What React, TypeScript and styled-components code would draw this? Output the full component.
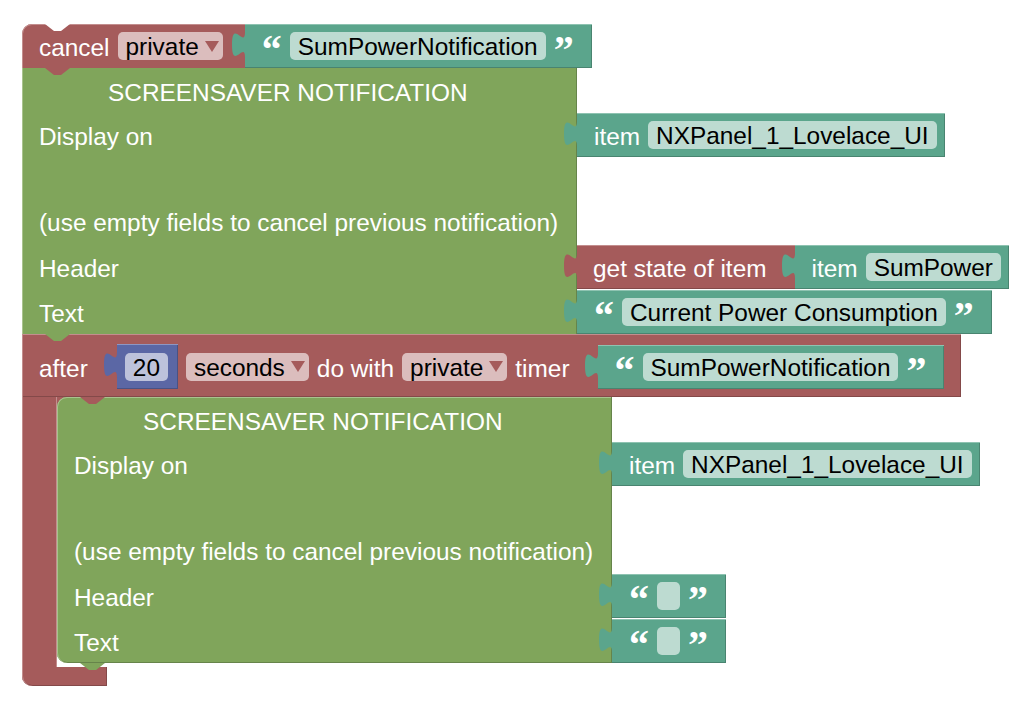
import styled, { createGlobalStyle } from "styled-components";
import type { ReactNode } from "react";

const palette = {
  red: { base: "#a55b5b", light: "#c38e8e", dark: "#844949", field: "#dbbdbd" },
  green: { base: "#80a55b", light: "#a9c38e", dark: "#66844a", field: "#ccdbbd" },
  teal: { base: "#5ba58c", light: "#8ec3b1", dark: "#498470", field: "#bddbd1" },
  blue: { base: "#5b67a5", light: "#8e96c3", dark: "#495284", field: "#bdc2db" },
};
type Tone = keyof typeof palette;

const GlobalStyle = createGlobalStyle`
  * { box-sizing: border-box; }
  body {
    margin: 0;
    background: #fff;
    font-family: "Liberation Sans", Arial, sans-serif;
    font-size: 24.4px;
  }
`;

const Workspace = styled.div`
  display: flex;
  flex-direction: column;
  align-items: flex-start;
  padding: 24px 0 0 22px;
`;

const Label = styled.span`
  color: #fff;
  white-space: nowrap;
  line-height: 28px;
  margin-top: 4px;
`;

const Field = styled.span<{ $tone: Tone; $pr?: number }>`
  display: inline-flex;
  align-items: center;
  flex-shrink: 0;
  height: 28px;
  min-width: 23px;
  padding: 2px ${(p) => p.$pr ?? 8}px 0 8px;
  border-radius: 5px;
  background: ${(p) => palette[p.$tone].field};
  color: #000;
  white-space: nowrap;
`;

const Arrow = styled.span`
  width: 0;
  height: 0;
  margin: -2px 0 0 6px;
  border-left: 7px solid transparent;
  border-right: 7px solid transparent;
  border-top: 11px solid ${palette.red.base};
`;

const Quote = styled.span`
  align-self: flex-start;
  margin-top: 6px;
  font-family: "Liberation Serif", "Times New Roman", serif;
  font-weight: 700;
  font-size: 40px;
  line-height: 40px;
  color: #fff;
`;

const ValueBlock = styled.div<{ $tone: Tone; $pl?: number; $pr?: number; $ml?: number; $h?: number }>`
  position: relative;
  display: flex;
  align-items: center;
  flex-shrink: 0;
  gap: 8px;
  height: ${(p) => p.$h ?? 44}px;
  padding-left: ${(p) => p.$pl ?? 17}px;
  padding-right: ${(p) => p.$pr ?? 8}px;
  margin-left: ${(p) => p.$ml ?? 0}px;
  background: ${(p) => palette[p.$tone].base};
  box-shadow: inset 0 1px 0 ${(p) => palette[p.$tone].light},
    inset 0 -1px 0 ${(p) => palette[p.$tone].dark},
    inset -1px 0 0 ${(p) => palette[p.$tone].dark};
`;

const TabShape = styled.svg`
  position: absolute;
  left: -13px;
  top: 8px;
  overflow: visible;
`;

const Tab = ({ tone }: { tone: Tone }) => (
  <TabShape width="14" height="26" viewBox="0 0 14 26">
    <path
      d="M14,0 L13,0 C13,17 0,-13.5 0,12.75 C0,39 13,8.5 13,25.5 L14,25.5 Z"
      fill={palette[tone].base}
    />
  </TabShape>
);

const Notch = styled.span<{ $color: string; $edge: "top" | "bottom"; $left?: number }>`
  position: absolute;
  left: ${(p) => p.$left ?? 23}px;
  top: ${(p) => (p.$edge === "top" ? "0" : "100%")};
  width: 25px;
  height: 7px;
  background: ${(p) => p.$color};
  clip-path: polygon(0 0, 100% 0, 64% 100%, 36% 100%);
  z-index: 3;
`;

const CancelHead = styled.div`
  position: relative;
  display: flex;
  align-items: center;
  gap: 8px;
  height: 44px;
  padding-left: 17px;
  background: ${palette.red.base};
  border-top-left-radius: 10px;
  box-shadow: inset 0 1px 0 ${palette.red.light}, inset 1px 0 0 ${palette.red.light};
`;

const GreenStack = styled.div<{ $nested?: boolean }>`
  position: relative;
  display: flex;
  flex-direction: column;
  margin-bottom: ${(p) => (p.$nested ? 4 : 0)}px;
  background: ${(p) =>
    p.$nested ? `linear-gradient(${palette.red.base}, ${palette.red.base}) 0 0 / 12px 12px no-repeat` : "none"};
`;

const GreenRow = styled.div`
  display: flex;
  align-items: center;
`;

const GreenCell = styled.div<{ $h: number; $pl?: number; $pt?: number; $round?: "top" | "bottom" }>`
  display: flex;
  align-items: center;
  flex-shrink: 0;
  width: 555px;
  height: ${(p) => p.$h}px;
  padding-left: ${(p) => p.$pl ?? 17}px;
  padding-top: ${(p) => p.$pt ?? 4}px;
  background: ${palette.green.base};
  color: #fff;
  white-space: nowrap;
  border-top-left-radius: ${(p) => (p.$round === "top" ? 10 : 0)}px;
  border-bottom-left-radius: ${(p) => (p.$round === "bottom" ? 10 : 0)}px;
  box-shadow: inset 1px 0 0 ${palette.green.light}, inset -1px 0 0 ${palette.green.dark}
    ${(p) => (p.$round === "top" ? `, inset 0 1px 0 ${palette.green.light}` : "")}
    ${(p) => (p.$round === "bottom" ? `, inset 0 -1px 0 ${palette.green.dark}` : "")};
`;

const AfterHead = styled.div`
  position: relative;
  display: flex;
  align-items: center;
  gap: 8px;
  padding: 10px 17px 8px 17px;
  background: ${palette.red.base};
  box-shadow: inset 0 1px 0 ${palette.red.light}, inset 1px 0 0 ${palette.red.light},
    inset -1px 0 0 ${palette.red.dark}, inset 0 -1px 0 ${palette.red.dark};
`;

const AfterBody = styled.div`
  display: flex;
  align-items: stretch;
`;

const Arm = styled.div`
  width: 35px;
  flex-shrink: 0;
  background: ${palette.red.base};
  box-shadow: inset 1px 0 0 ${palette.red.light}, inset -1px 0 0 ${palette.red.light};
`;

const AfterFoot = styled.div`
  position: relative;
  width: 85px;
  height: 19px;
  background: ${palette.red.base};
  border-bottom-left-radius: 10px;
  box-shadow: inset 1px 0 0 ${palette.red.light}, inset -1px 0 0 ${palette.red.dark},
    inset 0 -1px 0 ${palette.red.dark};
`;

const Dropdown = ({ children }: { children: ReactNode }) => (
  <Field $tone="red" $pr={4}>
    {children}
    <Arrow />
  </Field>
);

const StringBlock = ({ text, ml }: { text: string; ml?: number }) => (
  <ValueBlock $tone="teal" $pr={18} $ml={ml}>
    <Tab tone="teal" />
    <Quote>&ldquo;</Quote>
    <Field $tone="teal">{text}</Field>
    <Quote>&rdquo;</Quote>
  </ValueBlock>
);

const ItemBlock = ({ name, ml }: { name: string; ml?: number }) => (
  <ValueBlock $tone="teal" $ml={ml}>
    <Tab tone="teal" />
    <Label>item</Label>
    <Field $tone="teal">{name}</Field>
  </ValueBlock>
);

const GetStateBlock = ({ name }: { name: string }) => (
  <ValueBlock $tone="red" $pl={16} $pr={0}>
    <Tab tone="red" />
    <Label>get state of item</Label>
    <ItemBlock name={name} ml={20} />
  </ValueBlock>
);

const NotificationBlock = ({
  display,
  header,
  text,
  nested,
}: {
  display: ReactNode;
  header: ReactNode;
  text: ReactNode;
  nested?: boolean;
}) => (
  <GreenStack $nested={nested}>
    <GreenRow>
      <GreenCell $h={45} $pl={86} $round={nested ? "top" : undefined}>
        SCREENSAVER NOTIFICATION
      </GreenCell>
    </GreenRow>
    <GreenRow>
      <GreenCell $h={44}>Display on</GreenCell>
      {display}
    </GreenRow>
    <GreenRow>
      <GreenCell $h={43} />
    </GreenRow>
    <GreenRow>
      <GreenCell $h={45} $pt={0}>
        (use empty fields to cancel previous notification)
      </GreenCell>
    </GreenRow>
    <GreenRow>
      <GreenCell $h={44}>Header</GreenCell>
      {header}
    </GreenRow>
    <GreenRow>
      <GreenCell $h={45} $round={nested ? "bottom" : undefined}>
        Text
      </GreenCell>
      {text}
    </GreenRow>
    <Notch $color={palette.green.base} $edge="bottom" />
  </GreenStack>
);

export default function App() {
  return (
    <>
      <GlobalStyle />
      <Workspace>
        <CancelHead>
          <Notch $color="#fff" $edge="top" />
          <Label>cancel</Label>
          <Dropdown>private</Dropdown>
          <StringBlock text="SumPowerNotification" ml={14} />
          <Notch $color={palette.red.base} $edge="bottom" />
        </CancelHead>

        <NotificationBlock
          display={<ItemBlock name="NXPanel_1_Lovelace_UI" />}
          header={<GetStateBlock name="SumPower" />}
          text={<StringBlock text="Current Power Consumption" />}
        />

        <AfterHead>
          <Label>after</Label>
          <ValueBlock $tone="blue" $pl={8} $pr={10} $ml={21} $h={45}>
            <Tab tone="blue" />
            <Field $tone="blue">20</Field>
          </ValueBlock>
          <Dropdown>seconds</Dropdown>
          <Label>do with</Label>
          <Dropdown>private</Dropdown>
          <Label>timer</Label>
          <StringBlock text="SumPowerNotification" ml={20} />
          <Notch $color={palette.red.base} $edge="bottom" $left={58} />
        </AfterHead>
        <AfterBody>
          <Arm />
          <NotificationBlock
            nested
            display={<ItemBlock name="NXPanel_1_Lovelace_UI" />}
            header={<StringBlock text="" />}
            text={<StringBlock text="" />}
          />
        </AfterBody>
        <AfterFoot>
          <Notch $color={palette.red.base} $edge="bottom" />
        </AfterFoot>
      </Workspace>
    </>
  );
}
